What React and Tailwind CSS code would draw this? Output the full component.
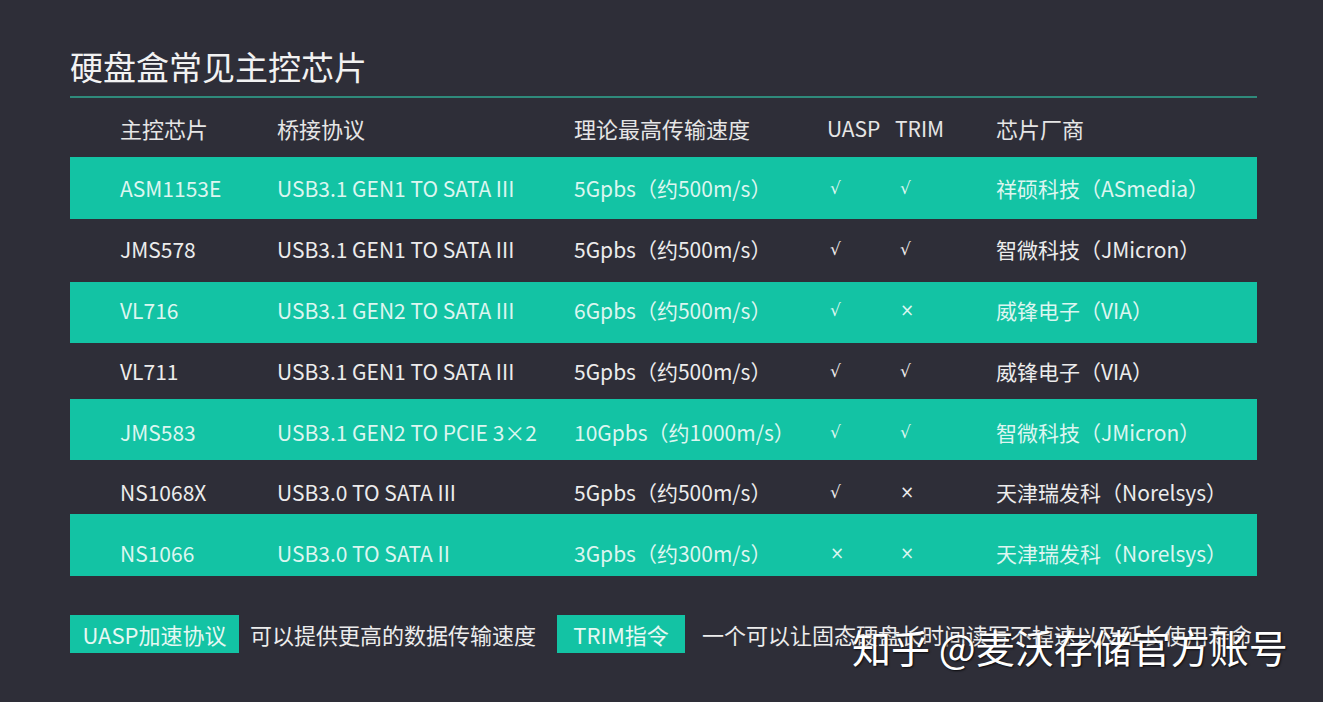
import React from "react";

const rows = [
  { chip: "ASM1153E", proto: "USB3.1 GEN1 TO SATA III", speed: "5Gpbs（约500m/s）", uasp: "√", trim: "√", vendor: "祥硕科技（ASmedia）", teal: true, cls: "h-[62px] pt-[17px]" },
  { chip: "JMS578", proto: "USB3.1 GEN1 TO SATA III", speed: "5Gpbs（约500m/s）", uasp: "√", trim: "√", vendor: "智微科技（JMicron）", teal: false, cls: "h-[63px] pt-[16px]" },
  { chip: "VL716", proto: "USB3.1 GEN2 TO SATA III", speed: "6Gpbs（约500m/s）", uasp: "√", trim: "×", vendor: "威锋电子（VIA）", teal: true, cls: "h-[61px] pt-[14px]" },
  { chip: "VL711", proto: "USB3.1 GEN1 TO SATA III", speed: "5Gpbs（约500m/s）", uasp: "√", trim: "√", vendor: "威锋电子（VIA）", teal: false, cls: "h-[56px] pt-[14px]" },
  { chip: "JMS583", proto: "USB3.1 GEN2 TO PCIE 3×2", speed: "10Gpbs（约1000m/s）", uasp: "√", trim: "√", vendor: "智微科技（JMicron）", teal: true, cls: "h-[61px] pt-[19px]" },
  { chip: "NS1068X", proto: "USB3.0 TO SATA III", speed: "5Gpbs（约500m/s）", uasp: "√", trim: "×", vendor: "天津瑞发科（Norelsys）", teal: false, cls: "h-[54px] pt-[18px]" },
  { chip: "NS1066", proto: "USB3.0 TO SATA II", speed: "3Gpbs（约300m/s）", uasp: "×", trim: "×", vendor: "天津瑞发科（Norelsys）", teal: true, cls: "h-[62px] pt-[25px]" },
];

const grid = "grid grid-cols-[157px_297px_253px_68px_101px_1fr] pl-[50px]";

export default function App() {
  return (
    <div
      className="relative h-[702px] w-full overflow-hidden bg-[#2e2e38] text-[#ececec]"
      style={{ fontFamily: '"Noto Sans CJK SC", "Noto Sans", sans-serif' }}
    >
      <div className="pl-[70px] pr-[66px]">
        <div className="pt-[46px] pb-[10px] border-b-2 border-[#2f8a7b]">
          <h1 className="text-[33px] leading-[40px] font-normal text-[#f2f2f2]">硬盘盒常见主控芯片</h1>
        </div>

        <div className={`${grid} h-[59px] items-center text-[22px] leading-[28px] text-[#e6e6e6]`}>
          <div>主控芯片</div>
          <div>桥接协议</div>
          <div>理论最高传输速度</div>
          <div className="text-[21px]">UASP</div>
          <div className="text-[21px]">TRIM</div>
          <div>芯片厂商</div>
        </div>

        <div className="flex flex-col">
          {rows.map((r) => (
            <div
              key={r.chip}
              className={`${grid} ${r.cls} items-start text-[21px] leading-[28px] ${
                r.teal ? "bg-[#13c3a4] text-[#dcf6f0]" : "text-[#ececec]"
              }`}
            >
              <div>{r.chip}</div>
              <div>{r.proto}</div>
              <div>{r.speed}</div>
              <div className="pl-[3px] font-['DejaVu_Sans'] text-[17px]">{r.uasp}</div>
              <div className="pl-[5px] font-['DejaVu_Sans'] text-[17px]">{r.trim}</div>
              <div>{r.vendor}</div>
            </div>
          ))}
        </div>

        <div className="mt-[39px] flex items-center text-[22px] leading-[28px]">
          <div className="flex h-[38px] w-[169px] shrink-0 items-center justify-center bg-[#13c3a4] text-[#e6f8f3]">UASP加速协议</div>
          <div className="ml-[11px] shrink-0 text-[#ececec]">可以提供更高的数据传输速度</div>
          <div className="ml-[21px] flex h-[38px] w-[128px] shrink-0 items-center justify-center bg-[#13c3a4] text-[#e6f8f3]">TRIM指令</div>
          <div className="ml-[17px] whitespace-nowrap text-[#ececec]">一个可以让固态硬盘长时间读写不掉速以及延长使用寿命</div>
        </div>
      </div>

      <div
        className="absolute left-[852px] top-[623px] whitespace-nowrap text-[39px] leading-[46px] text-white"
        style={{ textShadow: "1px 1px 2px rgba(0,0,0,0.8)" }}
      >
        知乎 @麦沃存储官方账号
      </div>
    </div>
  );
}
